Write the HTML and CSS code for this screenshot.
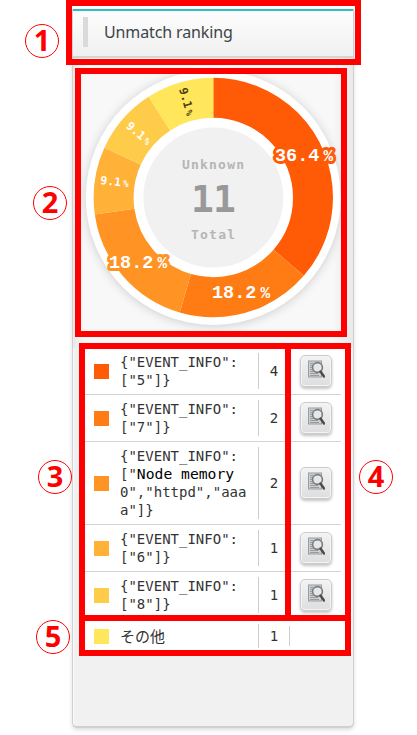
FILE: index.html
```
<!DOCTYPE html>
<html lang="en">
<head>
<meta charset="utf-8">
<title>Unmatch ranking</title>
<link rel="stylesheet" href="styles.css">
</head>
<body>
<svg class="defs" aria-hidden="true">
  <symbol id="detail" viewBox="0 0 18 18">
    <rect x="1.500" y="1" width="13" height="16" fill="#cdd0d2" stroke="#8fa0ac"/>
    <path d="M3 3.500h3M3 5.500h2M3 7.500h2M3 9.500h2M3 11.500h4M3 13.500h8M3 15.500h9" stroke="#9b9b9b"/>
    <circle cx="10.500" cy="7.500" r="4.900" fill="#e5e7e9" stroke="#7c7c7c" stroke-width="1.600"/>
    <path d="M13.500 11.500l3.500 5" stroke="#4d4d4d" stroke-width="2.400" stroke-linecap="round"/>
  </symbol>
</svg>
<main class="panel">
  <header class="head"><span class="grip"></span><h1>Unmatch ranking</h1></header>
  <section class="chart">
    <svg width="260" height="262" viewBox="81 71 260 262">
      <circle class="ring" cx="213.300" cy="197.500" r="127.500"/>
      <g class="slices" transform="rotate(-90 213.300 197.500)">
        <circle cx="213.300" cy="197.500" r="99.700" pathLength="11" stroke="#ff5a05" stroke-dasharray="4 7"/>
        <circle cx="213.300" cy="197.500" r="99.700" pathLength="11" stroke="#ff7b14" stroke-dasharray="2 9" stroke-dashoffset="-4"/>
        <circle cx="213.300" cy="197.500" r="99.700" pathLength="11" stroke="#ff9425" stroke-dasharray="2 9" stroke-dashoffset="-6"/>
        <circle cx="213.300" cy="197.500" r="99.700" pathLength="11" stroke="#ffb138" stroke-dasharray="1 10" stroke-dashoffset="-8"/>
        <circle cx="213.300" cy="197.500" r="99.700" pathLength="11" stroke="#ffcc49" stroke-dasharray="1 10" stroke-dashoffset="-9"/>
        <circle cx="213.300" cy="197.500" r="99.700" pathLength="11" stroke="#ffe65b" stroke-dasharray="1 10" stroke-dashoffset="-10"/>
      </g>
      <circle cx="213.300" cy="197.500" r="70" fill="#f1f1f1"/>
      <g class="pct">
        <text x="275" y="161" stroke="#ff5a05">36.4<tspan class="unit" dx="4">%</tspan></text>
        <text x="212" y="298" stroke="#ff7b14">18.2<tspan class="unit" dx="4">%</tspan></text>
        <text x="109" y="268" stroke="#ff9425">18.2<tspan class="unit" dx="4">%</tspan></text>
      </g>
      <g class="small">
        <text transform="translate(100 184) rotate(6)">9.1<tspan class="tiny" dx="2">%</tspan></text>
        <text transform="translate(125.500 127) rotate(41)">9.1<tspan class="tiny" dx="2">%</tspan></text>
        <text class="dark" transform="translate(179 89) rotate(74)">9.1<tspan class="tiny" dx="2">%</tspan></text>
      </g>
      <g class="center">
        <text x="213" y="169" textLength="62">Unknown</text>
        <text class="total" x="213.500" y="212" textLength="45">11</text>
        <text x="213" y="239" textLength="44">Total</text>
      </g>
    </svg>
  </section>
  <section class="list">
    <div class="row"><i class="swatch c1"></i><p>{"EVENT_INFO":<br>["5"]}</p><b>4</b><div class="action"><button aria-label="Detail"><svg><use href="#detail"/></svg></button></div></div>
    <div class="row"><i class="swatch c2"></i><p>{"EVENT_INFO":<br>["7"]}</p><b>2</b><div class="action"><button aria-label="Detail"><svg><use href="#detail"/></svg></button></div></div>
    <div class="row"><i class="swatch c3"></i><p>{"EVENT_INFO":<br>["<span class="node">Node memory</span><br>0","httpd","aaa<br>a"]}</p><b>2</b><div class="action"><button aria-label="Detail"><svg><use href="#detail"/></svg></button></div></div>
    <div class="row"><i class="swatch c4"></i><p>{"EVENT_INFO":<br>["6"]}</p><b>1</b><div class="action"><button aria-label="Detail"><svg><use href="#detail"/></svg></button></div></div>
    <div class="row"><i class="swatch c5"></i><p>{"EVENT_INFO":<br>["8"]}</p><b>1</b><div class="action"><button aria-label="Detail"><svg><use href="#detail"/></svg></button></div></div>
    <div class="row other"><i class="swatch c6"></i><p lang="ja">その他</p><b>1</b><div class="action"></div></div>
  </section>
</main>
<div class="mark m1"></div><div class="mark m2"></div><div class="mark m3"></div><div class="mark m4"></div><div class="mark m5"></div>
<span class="num n1">1</span><span class="num n2">2</span><span class="num n3">3</span><span class="num n4">4</span><span class="num n5">5</span>
</body>
</html>
```
FILE: styles.css
```
* { box-sizing: border-box; }
body {
  position: relative;
  width: 417px;
  height: 735px;
  margin: 0;
  padding: 9px 0 0 72px;
  overflow: hidden;
  background: #fff;
  color: #333;
  font: 14px/18px "DejaVu Sans Mono", monospace;
}
.defs { position: absolute; width: 0; height: 0; }
.panel {
  width: 282px;
  height: 719px;
  border: 1px solid #d0d0d0;
  border-width: 0 1px 2px 1px;
  border-radius: 0 0 5px 5px;
  background: #f1f1f1;
  box-shadow: 0 2px 4px #ddd, inset 1px 0 #fafafa;
}
.head {
  display: flex;
  align-items: center;
  height: 49px;
  padding: 0 0 3px 10px;
  border-top: 2px solid #2abfc0;
  border-bottom: 2px solid #d4d4d4;
  background: linear-gradient(#fdfdfd, #f0f0f0);
}
.grip { width: 5px; height: 30px; background: #dadada; }
h1 { margin: 0 0 0 16px; color: #3c4448; font: 16px/20px "Noto Sans", sans-serif; letter-spacing: -.13px; }
.chart { height: 290px; padding: 13px 0 0 8px; background: linear-gradient(90deg, #e9e9e9, #f8f8f8 12px, #f8f8f8 260px, #e9e9e9); }
.chart svg { display: block; }
.ring { fill: #fff; filter: drop-shadow(0 1px 5px #ccc); }
.slices circle { fill: none; stroke-width: 40; }
.pct text { fill: #fff; stroke-width: 6px; stroke-linejoin: round; paint-order: stroke; font: bold 18.500px "Liberation Mono", monospace; }
.pct .unit { font-size: 16px; }
.small { fill: #fff; font-size: 11.500px; font-weight: bold; }
.small .tiny { font-size: 9.500px; }
.small .dark { fill: #4a4012; }
.center { fill: #b5b5b5; font-size: 13px; font-weight: bold; text-anchor: middle; }
.center .total { fill: #999; font-size: 38px; }
.list { width: 269px; margin-left: 10px; background: #fff; }
.row {
  display: grid;
  grid-template-columns: 37px 138px 31px 52px;
  align-items: center;
  min-height: 47px;
  width: 258px;
  padding: 5px 0;
  border-bottom: 1px solid #d4d4d4;
}
.swatch { width: 15px; height: 15px; margin-left: 11px; }
.c1 { background: #ff5a05; }
.c2 { background: #ff7b14; }
.c3 { background: #ff9425; }
.c4 { background: #ffb138; }
.c5 { background: #ffcc49; }
.c6 { background: #ffe65b; }
p { margin: 0; white-space: nowrap; }
.node { color: #000; font-size: 14.700px; line-height: 1; }
b { display: grid; place-items: center; align-self: stretch; border-left: 1px solid #ccc; font-weight: normal; }
.action { display: grid; justify-content: end; }
button {
  display: grid;
  justify-items: center;
  align-items: start;
  width: 32px;
  height: 32px;
  margin: 0 9px 0 0;
  padding: 4px 0 0;
  border: 1px solid #ccc;
  border-radius: 5px;
  background: linear-gradient(#f3f3f3, #dedede);
  box-shadow: 0 2px 3px #c4c4c4, inset 0 0 0 1px #f4f4f4;
}
button svg { width: 18px; height: 18px; }
.other { min-height: 34px; border: 0; }
.other p { font-family: "Noto Sans CJK JP", sans-serif; font-size: 15px; }
.other .action { height: 20px; border-left: 1px solid #ccc; }
.mark { position: absolute; border: 6px solid #f00; }
.m1 { left: 66px; top: 0; width: 295px; height: 65px; }
.m2 { left: 75px; top: 68px; width: 272px; height: 269px; }
.m3 { left: 79px; top: 343px; width: 212px; height: 278px; }
.m4 { left: 285px; top: 343px; width: 66px; height: 278px; }
.m5 { left: 79px; top: 615px; width: 272px; height: 41px; }
.num {
  position: absolute;
  display: grid;
  place-items: center;
  width: 34px;
  height: 34px;
  border: 1px solid #f00;
  border-radius: 50%;
  color: #f00;
  font: bold 29px/28px "Noto Sans", sans-serif;
  padding-bottom: 2px;
}
.n1 { left: 25px; top: 24px; }
.n2 { left: 33px; top: 186px; }
.n3 { left: 38px; top: 460px; }
.n4 { left: 359px; top: 460px; }
.n5 { left: 36px; top: 620px; }
```
